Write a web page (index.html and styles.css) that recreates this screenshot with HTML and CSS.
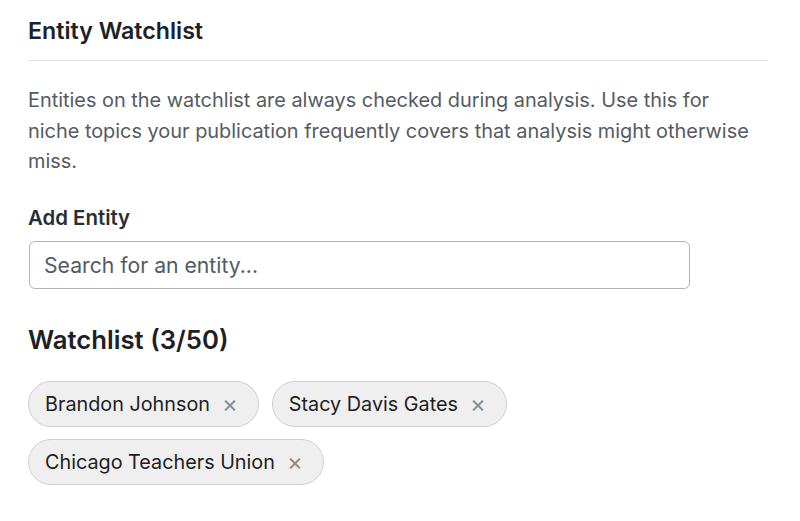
FILE: index.html
```html
<!DOCTYPE html>
<html lang="en">
<head>
    <meta charset="UTF-8">
    <title>Entity Watchlist</title>
    <link rel="stylesheet" href="styles.css">
</head>
<body>
    <div class="panel">
        <h2 class="panel-title">Entity Watchlist</h2>
        <p class="help">Entities on the watchlist are always checked during analysis. Use this for niche topics your publication frequently covers that analysis might otherwise miss.</p>

        <label class="field-label" for="entitySearch">Add Entity</label>
        <input type="text" id="entitySearch" class="search" placeholder="Search for an entity...">

        <h3 class="list-title">Watchlist (3/50)</h3>
        <div class="chips">
            <span class="chip">Brandon Johnson <span class="remove">&times;</span></span>
            <span class="chip">Stacy Davis Gates <span class="remove">&times;</span></span>
            <span class="chip">Chicago Teachers Union <span class="remove">&times;</span></span>
        </div>
    </div>
</body>
</html>
```

FILE: styles.css
```css
body {
    margin: 0;
    padding: 0 32px 0 28px;
    background: #fff;
    font-family: Inter, "Noto Sans", sans-serif;
    color: #1d2125;
}
.panel {
    width: 740px;
}
.panel-title {
    margin: 0;
    padding: 17px 0 15px;
    font-size: 23.2px;
    font-weight: 600;
    border-bottom: 1px solid #e5e5e5;
}
.help {
    max-width: 732px;
    margin: 24px 0 0;
    font-size: 19.9px;
    line-height: 30.5px;
    color: #555b62;
}
.field-label {
    display: block;
    margin-top: 28px;
    font-size: 20.4px;
    font-weight: 600;
    color: #2a2e33;
}
.search {
    display: block;
    box-sizing: border-box;
    width: 661px;
    height: 48px;
    margin: 11px 0 0 1px;
    padding: 0 14px;
    border: 1px solid #b3b3b3;
    border-radius: 6px;
    font-family: inherit;
    font-size: 21.2px;
    color: #222;
}
.search::placeholder {
    color: #545a61;
}
.list-title {
    margin: 35px 0 0;
    font-size: 25.7px;
    font-weight: 600;
}
.chips {
    display: flex;
    flex-wrap: wrap;
    gap: 12px 13px;
    margin-top: 26px;
}
.chip {
    display: inline-flex;
    align-items: center;
    box-sizing: border-box;
    height: 46px;
    padding: 0 20px 0 16px;
    background: #efefef;
    border: 1px solid #cfcfcf;
    border-radius: 23px;
    font-size: 19.8px;
    color: #1d1d1f;
}
.remove {
    margin-left: 12px;
    font-size: 24px;
    color: #8a8a8a;
    cursor: pointer;
}
```
